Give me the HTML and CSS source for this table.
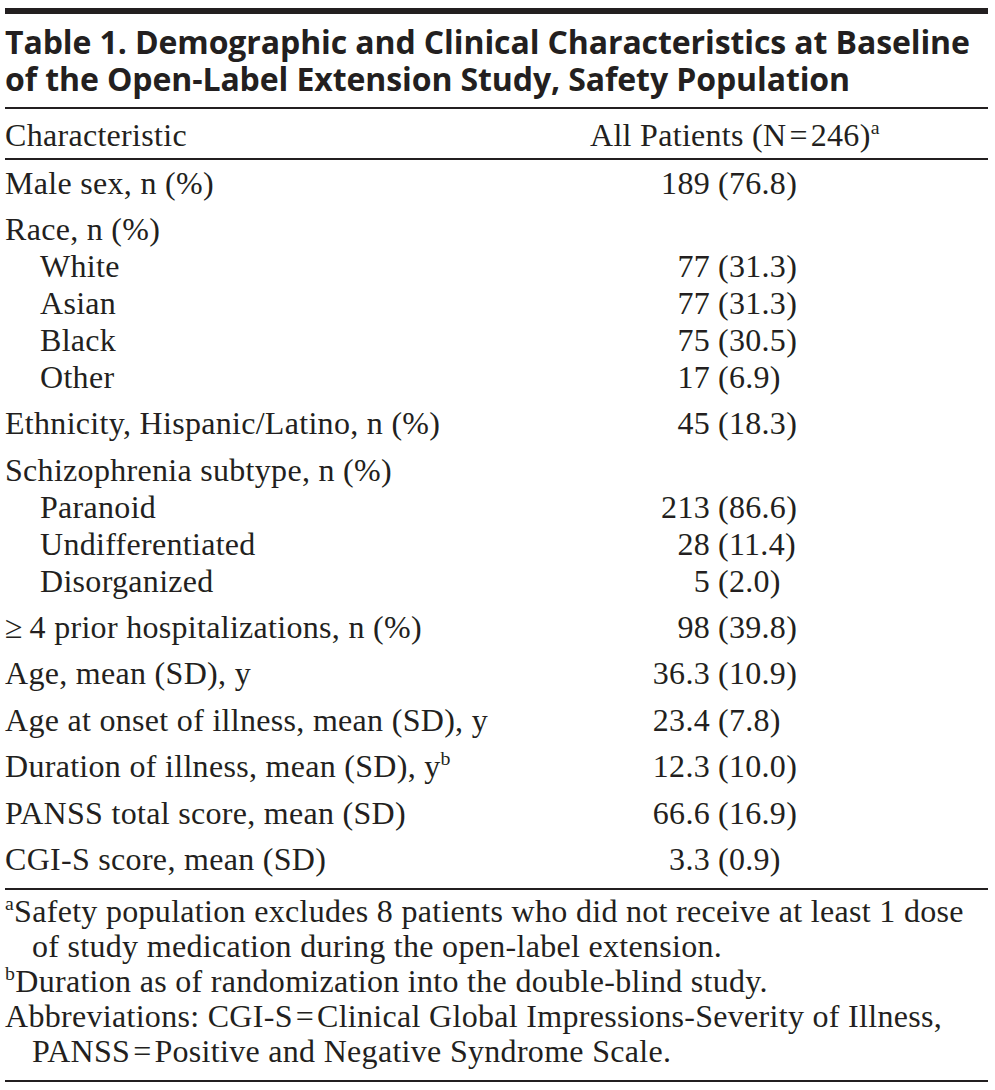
FILE: index.html
```html
<!DOCTYPE html>
<html lang="en">
<head>
<meta charset="utf-8">
<title>Table 1</title>
<link rel="stylesheet" href="styles.css">
</head>
<body>
<div class="page">
  <div class="rule-thick"></div>
  <h1 class="title"><span class="tline">Table 1. Demographic and Clinical Characteristics at Baseline</span><span class="tline">of the Open-Label Extension Study, Safety Population</span></h1>
  <div class="thead">
    <span class="hlabel">Characteristic</span>
    <span class="hval">All Patients (N&#8202;=&#8202;246)<sup>a</sup></span>
  </div>
  <div class="tbody">
    <div class="group">
      <div class="row"><span class="label">Male sex, n (%)</span><span class="num">189</span><span class="pct">(76.8)</span></div>
    </div>
    <div class="group">
      <div class="row"><span class="label">Race, n (%)</span></div>
      <div class="row sub"><span class="label">White</span><span class="num">77</span><span class="pct">(31.3)</span></div>
      <div class="row sub"><span class="label">Asian</span><span class="num">77</span><span class="pct">(31.3)</span></div>
      <div class="row sub"><span class="label">Black</span><span class="num">75</span><span class="pct">(30.5)</span></div>
      <div class="row sub"><span class="label">Other</span><span class="num">17</span><span class="pct">(6.9)</span></div>
    </div>
    <div class="group">
      <div class="row"><span class="label">Ethnicity, Hispanic/Latino, n (%)</span><span class="num">45</span><span class="pct">(18.3)</span></div>
    </div>
    <div class="group">
      <div class="row"><span class="label">Schizophrenia subtype, n (%)</span></div>
      <div class="row sub"><span class="label">Paranoid</span><span class="num">213</span><span class="pct">(86.6)</span></div>
      <div class="row sub"><span class="label">Undifferentiated</span><span class="num">28</span><span class="pct">(11.4)</span></div>
      <div class="row sub"><span class="label">Disorganized</span><span class="num">5</span><span class="pct">(2.0)</span></div>
    </div>
    <div class="group">
      <div class="row"><span class="label">&#8805;&#8201;4 prior hospitalizations, n (%)</span><span class="num">98</span><span class="pct">(39.8)</span></div>
    </div>
    <div class="group">
      <div class="row"><span class="label">Age, mean (SD), y</span><span class="num">36.3</span><span class="pct">(10.9)</span></div>
    </div>
    <div class="group">
      <div class="row"><span class="label">Age at onset of illness, mean (SD), y</span><span class="num">23.4</span><span class="pct">(7.8)</span></div>
    </div>
    <div class="group">
      <div class="row"><span class="label">Duration of illness, mean (SD), y<sup>b</sup></span><span class="num">12.3</span><span class="pct">(10.0)</span></div>
    </div>
    <div class="group">
      <div class="row"><span class="label">PANSS total score, mean (SD)</span><span class="num">66.6</span><span class="pct">(16.9)</span></div>
    </div>
    <div class="group">
      <div class="row"><span class="label">CGI-S score, mean (SD)</span><span class="num">3.3</span><span class="pct">(0.9)</span></div>
    </div>
  </div>
  <div class="notes">
    <p class="note"><sup>a</sup>Safety population excludes 8 patients who did not receive at least 1 dose<br>of study medication during the open-label extension.</p>
    <p class="note"><sup>b</sup>Duration as of randomization into the double-blind study.</p>
    <p class="note">Abbreviations: CGI-S&#8202;=&#8202;Clinical Global Impressions-Severity of Illness,<br>PANSS&#8202;=&#8202;Positive and Negative Syndrome Scale.</p>
  </div>
</div>
</body>
</html>
```

FILE: styles.css
```css
html, body {
  margin: 0;
  padding: 0;
  background: #ffffff;
}

body {
  color: #231f20;
  font-family: "Liberation Serif", "Times New Roman", serif;
  letter-spacing: 0.3px;
}

.page {
  width: 983px;
  margin-left: 5px;
  padding-top: 8px;
}

.rule-thick {
  height: 6px;
  background: #231f20;
}

.title {
  margin: 0;
  padding: 10px 0 10px;
  font-family: "Open Sans", Lato, sans-serif;
  font-weight: 700;
  font-size: 32px;
  line-height: 36.7px;
  letter-spacing: -0.1px;
  white-space: nowrap;
  border-bottom: 2px solid #231f20;
}

.tline {
  display: block;
  height: 36.7px;
}

.thead {
  display: grid;
  grid-template-columns: 585px auto;
  font-size: 32px;
  line-height: 36.9px;
  padding: 8px 0 4px;
  border-bottom: 2px solid #231f20;
  white-space: nowrap;
}

.tbody {
  padding-bottom: 5px;
  border-bottom: 2px solid #231f20;
}

.group {
  padding: 4.75px 0;
}

.row {
  display: grid;
  grid-template-columns: 600px 105px auto;
  font-size: 32px;
  line-height: 36.9px;
  white-space: nowrap;
}

.sub .label {
  padding-left: 35px;
}

.num {
  text-align: right;
}

.pct {
  padding-left: 8px;
}

sup {
  font-size: 0.62em;
  line-height: 0;
  vertical-align: 0.6em;
}

.notes {
  padding: 4px 0 11px;
  border-bottom: 2px solid #231f20;
}

.note {
  margin: 0;
  font-size: 32px;
  line-height: 35px;
  padding-left: 27px;
  text-indent: -27px;
  white-space: nowrap;
}
```
